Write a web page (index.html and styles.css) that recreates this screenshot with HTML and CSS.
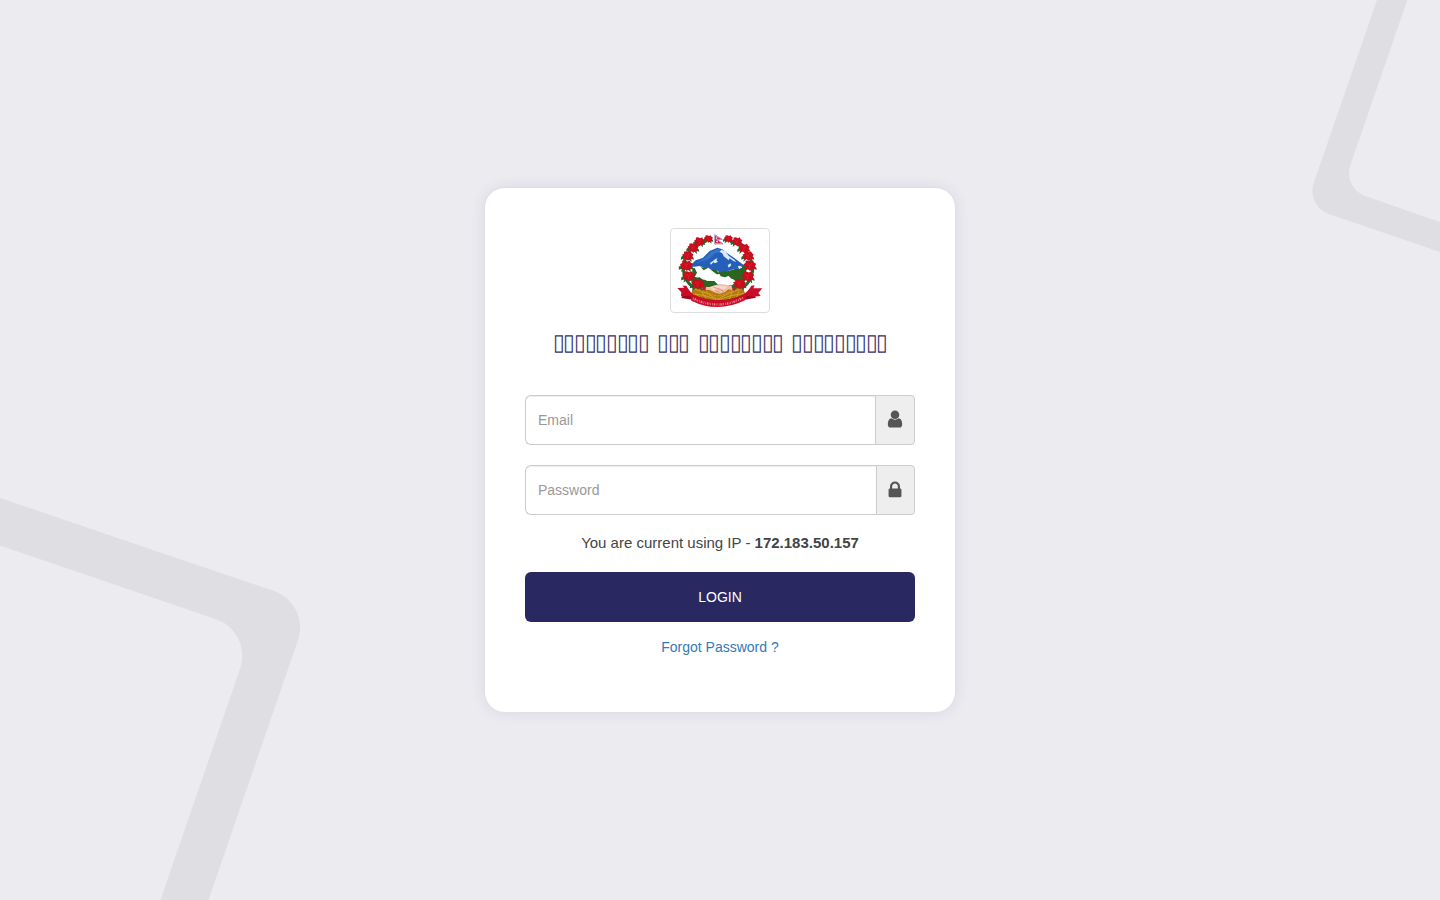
FILE: index.html
```html
<!DOCTYPE html>
<html lang="ne">
<head>
<meta charset="utf-8">
<title>Login</title>
<link rel="stylesheet" href="styles.css">
</head>
<body>
<svg class="backdrop" viewBox="0 0 1440 900" aria-hidden="true">
  <path d="M0 498L274 591A38.500 38.500 0 0 1 298 640L208.500 900H160.500L240.500 667.500A38.500 38.500 0 0 0 217 619.500L0 545.500Z"/>
  <path d="M1377 0L1313.700 183A24.500 24.500 0 0 0 1329 214L1440 252V222L1366.500 196.500A24.500 24.500 0 0 1 1350 166L1407.300 0Z"/>
</svg>
<main class="card">
  <div class="logo">
    <svg class="emblem" viewBox="18 18 294 249" role="img" aria-label="Emblem of Nepal">
      <defs>
        <g id="flower">
          <path fill="#2c6430" d="M-20 4L-9-4L-3 9L-14 18L-12 9L-20 12ZM17 5L7-1L2 10L12 19L11 10L19 12Z"/>
          <path fill="#c80d1c" d="M-4-13L3-10L9-13L12-7L17-4L14 3L15 10L7 10L1 15L-5 10L-13 10L-12 3L-17-3L-11-6L-11-12Z"/>
          <path fill="none" stroke="#e5303a" stroke-width="1.500" d="M-7-5L-1 0L6-5M0 0V8"/>
        </g>
      </defs>
      <g fill="none" stroke="#2c6430" stroke-width="9" stroke-linecap="round">
        <path d="M121 56Q65 72 56 126Q50 170 88 195"/>
        <path d="M199 56Q250 72 262 126Q268 170 232 195"/>
      </g>
      <path fill="#2a661f" d="M82 136L126 132L164 151L243 130L239 166L221 189L160 190L110 199L82 179Z"/>
      <path fill="#2460b9" d="M70 133L92 112L113 105L134 84L157 74L172 79L187 91L207 104L247 134L206 139L187 145L166 154L136 139L104 130Z"/>
      <path fill="#3674c6" d="M90 122L119 106L137 87L159 77L177 88L151 90L133 107Z"/>
      <path fill="#dce9f8" d="M169 80L181 85L191 98L208 110L214 117L205 114L194 106L191 112L182 104L176 100L173 92L164 86ZM151 108L158 106L154 112L159 116L150 121L145 118L138 125L135 120L144 114ZM188 127L196 121L199 127L191 134ZM218 130L225 128L233 133L223 139Z"/>
      <path fill="#fff" d="M88 133L104 130L116 142L130 134L143 144L159 143L167 160L180 163L192 158L211 174L231 172L219 187L159 185L148 174L118 174L104 163L88 164L96 149Z"/>
      <path fill="#2a661f" d="M139 142L151 139L162 149L179 144L195 148L209 139L224 139L236 132L244 145L235 159L218 166L210 163L201 169L190 158L177 160L169 153L155 154ZM81 163L92 162L102 169L119 170L132 176L145 176L140 184L117 180L105 189L87 182Z"/>
      <path fill="#b17b0b" d="M84 193Q106 181 137 201L162 208L184 199Q219 184 234 193L242 217Q161 252 78 217Z"/>
      <g fill="none" stroke="#d9a634" stroke-width="2.500">
        <path d="M91 199Q123 206 157 229Q193 207 230 197"/>
        <path d="M82 214Q116 212 157 232Q199 214 239 211"/>
        <path d="M101 191Q127 214 158 219Q191 213 215 190" stroke-dasharray="6 3"/>
        <path d="M91 211L105 223M111 207L124 228M202 206L193 228M222 203L214 226"/>
      </g>
      <path fill="#f3bda7" d="M111 191L134 192L149 187L165 184L188 186L205 188L205 202L190 199L180 207L164 212L151 209L134 201L114 201Z"/>
      <path fill="#f8d8c9" d="M134 193L153 188L167 188L188 191L177 199L159 196L146 203Z"/>
      <path fill="none" stroke="#cc7e65" stroke-width="2" d="M145 193L160 197L177 206M151 203L164 208"/>
      <path fill="#cf172c" d="M116 187L124 188L121 204L111 200ZM201 187L210 189L209 204L202 201Z"/>
      <use href="#flower" transform="translate(130 47) scale(.8)"/>
      <use href="#flower" transform="translate(103 55) scale(.93)"/>
      <use href="#flower" transform="translate(84 74)"/>
      <use href="#flower" transform="translate(68 98)"/>
      <use href="#flower" transform="translate(64 127) scale(1.13)"/>
      <use href="#flower" transform="translate(71 159) scale(1.12)"/>
      <use href="#flower" transform="translate(98 182) scale(1.16)"/>
      <use href="#flower" transform="translate(190 47) scale(.8)"/>
      <use href="#flower" transform="translate(216 55) scale(.93)"/>
      <use href="#flower" transform="translate(237 75)"/>
      <use href="#flower" transform="translate(249 98)"/>
      <use href="#flower" transform="translate(254 127) scale(1.13)"/>
      <use href="#flower" transform="translate(248 160) scale(1.12)"/>
      <use href="#flower" transform="translate(223 182) scale(1.12)"/>
      <path fill="#f4dfec" stroke="#514080" stroke-width="1.500" d="M149 35L172 49L158 50L174 63H149Z"/>
      <path fill="#d91944" d="M150 38L168 48L153 49L170 61H150Z"/>
      <path fill="#fff" d="M151 44L158 43L155 48ZM152 54L159 53L157 59Z"/>
      <path fill="#9c0820" d="M60 203L87 219L82 230L49 225ZM259 203L233 219L239 230L273 224Z"/>
      <path fill="#c90c28" d="M37 195L58 194L52 188L64 188Q76 210 89 216Q161 247 233 215Q250 205 259 188L269 187L265 196L292 196L280 210L287 219L265 221L244 218L240 232Q159 272 79 233L77 218L48 220L49 208Z"/>
      <path fill="none" stroke="#e88f96" stroke-width="7" stroke-dasharray="2 3 4 2 1 2 2 4" d="M84 226Q159 264 235 224"/>
    </svg>
  </div>
  <h1 class="title">&#x25AF;&#x25AF;&#x25AF;&#x25AF;&#x25AF;&#x25AF;&#x25AF;&#x25AF;&#x25AF; &#x25AF;&#x25AF;&#x25AF; &#x25AF;&#x25AF;&#x25AF;&#x25AF;&#x25AF;&#x25AF;&#x25AF;&#x25AF; &#x25AF;&#x25AF;&#x25AF;&#x25AF;&#x25AF;&#x25AF;&#x25AF;&#x25AF;&#x25AF;</h1>
  <form class="form">
    <div class="field">
      <input class="input" type="email" placeholder="Email" aria-label="Email">
      <span class="addon"><svg class="icon" viewBox="0 0 1792 1792"><path d="M1536 1399q0 109-62.500 187t-150.500 78h-854q-88 0-150.500-78t-62.500-187q0-85 8.500-160.500t31.500-152 58.500-131 94-89 134.500-34.500q131 128 313 128t313-128q76 0 134.500 34.500t94 89 58.500 131 31.500 152 8.500 160.500zm-256-887q0 159-112.500 271.500t-271.500 112.500-271.500-112.500-112.500-271.500 112.500-271.500 271.500-112.500 271.500 112.500 112.500 271.500z"/></svg></span>
    </div>
    <div class="field">
      <input class="input" type="password" placeholder="Password" aria-label="Password">
      <span class="addon addon-lock"><svg class="icon" viewBox="0 0 1792 1792"><path d="M640 768h512v-192q0-106-75-181t-181-75-181 75-75 181v192zm832 96v576q0 40-28 68t-68 28h-960q-40 0-68-28t-28-68v-576q0-40 28-68t68-28h32v-192q0-184 132-316t316-132 316 132 132 316v192h32q40 0 68 28t28 68z"/></svg></span>
    </div>
    <p class="ip">You are current using IP - <strong>172.183.50.157</strong></p>
    <button class="login" type="button">LOGIN</button>
    <a class="forgot" href="#">Forgot Password ?</a>
  </form>
</main>
</body>
</html>
```
FILE: styles.css
```css
* { box-sizing: border-box; }
body {
  margin: 0;
  height: 100vh;
  display: flex;
  align-items: center;
  justify-content: center;
  overflow: hidden;
  background: #ebebf0;
  color: #444;
  font: 14px/20px "Liberation Sans", Arial, sans-serif;
}
.backdrop {
  position: absolute;
  inset: 0;
  width: 1440px;
  height: 900px;
  z-index: -1;
  fill: #dedee3;
}
.card {
  width: 470px;
  height: 524px;
  padding: 40px;
  background: #fff;
  border-radius: 20px;
  box-shadow: 0 0 15px rgba(41, 40, 96, .1);
  display: flex;
  flex-direction: column;
  align-items: center;
}
.logo {
  width: 100px;
  height: 85px;
  border: 1px solid #ddd;
  border-radius: 4px;
  background: #fff;
}
.emblem { display: block; width: 98px; height: 83px; }
.title {
  margin: 13px 0 38px;
  height: 31px;
  line-height: 31px;
  font-size: 21px;
  font-weight: 400;
  letter-spacing: -1.37px;
  word-spacing: 4.2px;
  white-space: nowrap;
  transform: scaleY(1.08);
  color: #35336b;
}
.form {
  width: 100%;
  display: flex;
  flex-direction: column;
}
.field {
  display: flex;
  height: 50px;
  margin-bottom: 20px;
}
.input {
  flex: 1;
  min-width: 0;
  padding: 6px 12px;
  border: 1px solid #ccc;
  border-right: 0;
  border-radius: 6px 0 0 6px;
  background: #fff;
  box-shadow: inset 0 1px 1px rgba(0, 0, 0, .075);
  font: inherit;
}
.input::placeholder { color: #999; }
.addon {
  width: 40px;
  display: flex;
  justify-content: center;
  padding: 13.4px 0 0 .8px;
  border: 1px solid #ccc;
  border-radius: 0 4px 4px 0;
  background: #eee;
}
.addon-lock { width: 39px; padding: 13.5px .4px 0 0; }
.icon { width: 20px; height: 20px; fill: #555; }
.ip {
  margin: -2px 0 19px;
  text-align: center;
  font-size: 15px;
}
.login {
  height: 50px;
  padding: 0;
  border: 0;
  border-radius: 6px;
  background: #292860;
  color: #fff;
  font: inherit;
}
.forgot {
  margin-top: 15px;
  align-self: center;
  color: #337ab7;
  text-decoration: none;
}
```
